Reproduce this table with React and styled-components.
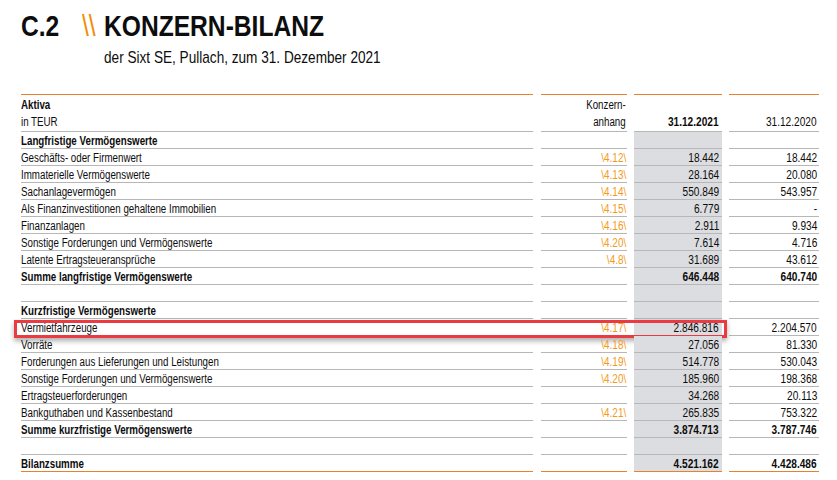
import React from "react";
import styled, { createGlobalStyle, css } from "styled-components";

const GlobalStyle = createGlobalStyle`
  html, body { margin: 0; padding: 0; background: #ffffff; }
  body {
    font-family: "Liberation Sans", Arial, sans-serif;
    color: #0d0d0d;
  }
`;

const ORANGE_LINE = "#e9812b";
const ORANGE_TEXT = "#f39a1c";
const GRAY_LINE = "#b7b7b7";
const SHADE = "#dcdde0";

const Page = styled.div`
  width: 837px;
  height: 480px;
  box-sizing: border-box;
  padding: 11px 0 0 21px;
  overflow: hidden;
`;

/* condensed text: the narrow face is not installed, so squeeze the regular one */
const Narrow = styled.span`
  display: inline-block;
  white-space: nowrap;
  transform: scaleX(${(p) => p.$scale || 0.78});
  transform-origin: ${(p) => (p.$right ? "right" : "left")} center;
`;

const TitleRow = styled.h1`
  display: flex;
  align-items: baseline;
  margin: 0;
  font-size: 30px;
  line-height: 30px;
  font-weight: 700;
`;

const ChapterNo = styled.span`
  flex: 0 0 61px;
`;

const Slashes = styled.span`
  flex: 0 0 22px;
  color: #f28c00;
  font-weight: 400;
`;

const Subtitle = styled.div`
  margin: 7px 0 0 83px;
  font-size: 17px;
  line-height: 20px;
`;

const Table = styled.div`
  margin-top: 26px;
  width: 798px;
`;

const Row = styled.div`
  display: grid;
  grid-template-columns: 513px 86px 88px 90px;
  column-gap: 7px;
  position: relative;
  font-size: 12.5px;
`;

const Cell = styled.div`
  box-sizing: border-box;
  height: ${(p) => (p.$header ? "38px" : "17px")};
  line-height: 18px;
  border-bottom: 1px solid ${(p) => (p.$last ? ORANGE_LINE : GRAY_LINE)};
  ${(p) =>
    p.$header &&
    css`
      border-top: 1px solid ${ORANGE_LINE};
      padding-top: 2px;
      line-height: 17px;
    `}
  font-weight: ${(p) => (p.$bold ? 700 : 400)};
  white-space: nowrap;
`;

const LabelCell = styled(Cell)`
  margin-right: 1px;
`;

const NoteCell = styled(Cell)`
  text-align: right;
  color: ${(p) => (p.$header ? "#0d0d0d" : ORANGE_TEXT)};
  padding-right: 1px;
`;

const CurCell = styled(Cell)`
  text-align: right;
  padding-right: 3px;
  background: ${(p) => (p.$header ? "transparent" : SHADE)};
`;

const PrevCell = styled(Cell)`
  text-align: right;
  padding-right: 2px;
`;

const HeaderStack = styled.div`
  display: flex;
  flex-direction: column;
  align-items: ${(p) => (p.$right ? "flex-end" : "flex-start")};
`;

const Highlight = styled.div`
  position: absolute;
  left: -7px;
  top: 1px;
  width: 713px;
  height: 18px;
  box-sizing: border-box;
  border: 3px solid #ea3b43;
  box-shadow: 0 3px 5px rgba(0, 0, 0, 0.32);
  pointer-events: none;
`;

const rows = [
  { section: true, label: "Langfristige Vermögenswerte" },
  { label: "Geschäfts- oder Firmenwert", note: "\\4.12\\", cur: "18.442", prev: "18.442" },
  { label: "Immaterielle Vermögenswerte", note: "\\4.13\\", cur: "28.164", prev: "20.080" },
  { label: "Sachanlagevermögen", note: "\\4.14\\", cur: "550.849", prev: "543.957" },
  { label: "Als Finanzinvestitionen gehaltene Immobilien", note: "\\4.15\\", cur: "6.779", prev: "-" },
  { label: "Finanzanlagen", note: "\\4.16\\", cur: "2.911", prev: "9.934" },
  { label: "Sonstige Forderungen und Vermögenswerte", note: "\\4.20\\", cur: "7.614", prev: "4.716" },
  { label: "Latente Ertragsteueransprüche", note: "\\4.8\\", cur: "31.689", prev: "43.612" },
  { bold: true, label: "Summe langfristige Vermögenswerte", cur: "646.448", prev: "640.740" },
  { empty: true },
  { section: true, label: "Kurzfristige Vermögenswerte" },
  { label: "Vermietfahrzeuge", note: "\\4.17\\", cur: "2.846.816", prev: "2.204.570", highlight: true },
  { label: "Vorräte", note: "\\4.18\\", cur: "27.056", prev: "81.330" },
  { label: "Forderungen aus Lieferungen und Leistungen", note: "\\4.19\\", cur: "514.778", prev: "530.043" },
  { label: "Sonstige Forderungen und Vermögenswerte", note: "\\4.20\\", cur: "185.960", prev: "198.368" },
  { label: "Ertragsteuerforderungen", note: "", cur: "34.268", prev: "20.113" },
  { label: "Bankguthaben und Kassenbestand", note: "\\4.21\\", cur: "265.835", prev: "753.322" },
  { bold: true, label: "Summe kurzfristige Vermögenswerte", cur: "3.874.713", prev: "3.787.746" },
  { empty: true },
  { bold: true, last: true, label: "Bilanzsumme", cur: "4.521.162", prev: "4.428.486" },
];

const T = ({ children, right, scale }) =>
  children ? (
    <Narrow $right={right} $scale={scale}>
      {children}
    </Narrow>
  ) : null;

export default function App() {
  return (
    <Page>
      <GlobalStyle />
      <TitleRow>
        <ChapterNo>
          <Narrow $scale={0.82}>C.2</Narrow>
        </ChapterNo>
        <Slashes>
          <Narrow $scale={0.82}>\\</Narrow>
        </Slashes>
        <Narrow $scale={0.82}>KONZERN-BILANZ</Narrow>
      </TitleRow>
      <Subtitle>
        <Narrow $scale={0.8}>der Sixt SE, Pullach, zum 31. Dezember 2021</Narrow>
      </Subtitle>
      <Table>
        <Row>
          <LabelCell $header>
            <HeaderStack>
              <Narrow style={{ fontWeight: 700 }}>Aktiva</Narrow>
              <Narrow>in TEUR</Narrow>
            </HeaderStack>
          </LabelCell>
          <NoteCell $header>
            <HeaderStack $right>
              <Narrow $right>Konzern-</Narrow>
              <Narrow $right>anhang</Narrow>
            </HeaderStack>
          </NoteCell>
          <CurCell $header $bold>
            <HeaderStack $right>
              <span>&nbsp;</span>
              <Narrow $right $scale={0.81}>31.12.2021</Narrow>
            </HeaderStack>
          </CurCell>
          <PrevCell $header>
            <HeaderStack $right>
              <span>&nbsp;</span>
              <Narrow $right $scale={0.81}>31.12.2020</Narrow>
            </HeaderStack>
          </PrevCell>
        </Row>
        {rows.map((r, i) => (
          <Row key={i}>
            <LabelCell $bold={r.bold || r.section} $last={r.last}>
              <T>{r.label}</T>
            </LabelCell>
            <NoteCell $last={r.last}>
              <T right scale={0.8}>{r.note}</T>
            </NoteCell>
            <CurCell $bold={r.bold} $last={r.last}>
              <T right scale={0.81}>{r.cur}</T>
            </CurCell>
            <PrevCell $bold={r.bold} $last={r.last}>
              <T right scale={0.81}>{r.prev}</T>
            </PrevCell>
            {r.highlight && <Highlight />}
          </Row>
        ))}
      </Table>
    </Page>
  );
}
